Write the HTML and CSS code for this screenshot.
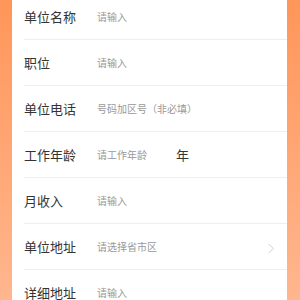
FILE: index.html
```html
<!DOCTYPE html>
<html lang="zh">
<head>
<meta charset="utf-8">
<link rel="stylesheet" href="styles.css">
</head>
<body>
<div class="card">
  <div class="row"><span class="label">单位名称</span><span class="ph">请输入</span></div>
  <div class="row"><span class="label">职位</span><span class="ph">请输入</span></div>
  <div class="row"><span class="label">单位电话</span><span class="ph">号码加区号（非必填）</span></div>
  <div class="row"><span class="label">工作年龄</span><span class="ph short">请工作年龄</span><span class="unit">年</span></div>
  <div class="row"><span class="label">月收入</span><span class="ph">请输入</span></div>
  <div class="row"><span class="label">单位地址</span><span class="ph grow">请选择省市区</span>
    <svg class="chev" width="8" height="11" viewBox="0 0 8 11"><path d="M1.5 1 L6.5 5.5 L1.5 10" fill="none" stroke="#cfd2d8" stroke-width="1"/></svg>
  </div>
  <div class="row"><span class="label">详细地址</span><span class="ph">请输入</span></div>
</div>
</body>
</html>
```
FILE: styles.css
```css
html, body {
  margin: 0;
  padding: 0;
  height: 300px;
  overflow: hidden;
}
body {
  background: linear-gradient(180deg, #ff965a 0%, #ffb68e 100%);
  font-family: "Noto Sans CJK SC", "Noto Sans", sans-serif;
}
.card {
  margin: -6px 13px 0 12px;
  background: #fff;
  height: 320px;
  padding-left: 12px;
}
.row {
  box-sizing: border-box;
  height: 46px;
  display: flex;
  align-items: center;
  border-bottom: 1px solid #eeeeee;
}
.label {
  width: 73px;
  font-size: 13px;
  color: #333;
}
.ph {
  font-size: 10px;
  color: #999;
}
.ph.short {
  width: 79px;
}
.ph.grow {
  flex: 1;
}
.unit {
  font-size: 13px;
  color: #333;
}
.chev {
  margin-right: 12px;
  margin-top: 3px;
}
```
